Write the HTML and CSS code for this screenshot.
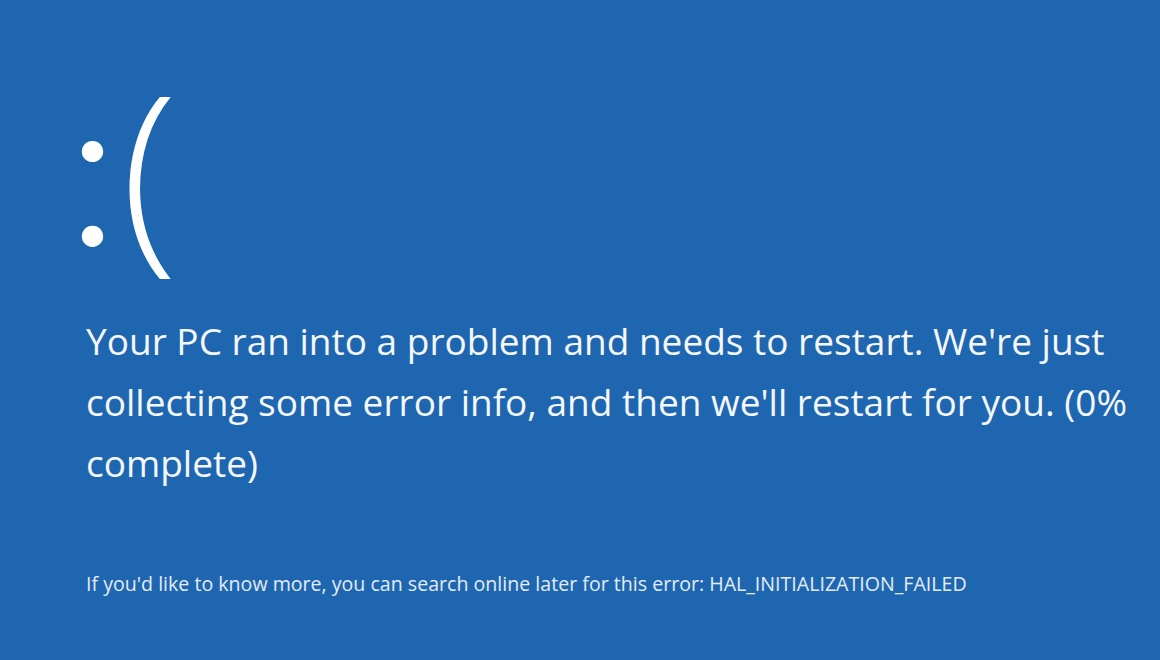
FILE: index.html
```html
<!DOCTYPE html>
<html lang="en">
<head>
<meta charset="utf-8">
<title>Your PC ran into a problem</title>
<link rel="stylesheet" href="styles.css">
</head>
<body>
<main class="screen">
  <div class="face"><span class="colon">:</span><span class="paren">(</span></div>
  <p class="message">Your PC ran into a problem and needs to restart. We're just collecting some error info, and then we'll restart for you. (0% complete)</p>
  <p class="info">If you'd like to know more, you can search online later for this error: HAL_INITIALIZATION_FAILED</p>
</main>
</body>
</html>
```
FILE: styles.css
```css
html, body {
  margin: 0;
  padding: 0;
  background: #1f66b1;
}
.screen {
  width: 1160px;
  height: 660px;
  box-sizing: border-box;
  padding: 0 0 0 86px;
  display: flex;
  flex-direction: column;
  color: #ffffff;
  font-family: "Open Sans", "Noto Sans", sans-serif;
  overflow: hidden;
}
.face {
  font-size: 208px;
  line-height: 1;
  height: 208px;
  margin: 62px 0 0 0;
  white-space: nowrap;
}
.colon {
  font-family: "Inter", "Open Sans", sans-serif;
  font-size: 202px;
  font-weight: 300;
  line-height: 0;
  margin-left: -22px;
}
.paren {
  font-weight: 300;
  margin-left: 0;
}
.message {
  margin: 40px 0 0 0;
  width: 1060px;
  font-size: 37px;
  font-weight: 400;
  line-height: 61px;
  color: #f4f7fb;
}
.info {
  margin: 77px 0 0 0;
  font-size: 19.6px;
  font-weight: 400;
  color: #e3ecf7;
}
```
